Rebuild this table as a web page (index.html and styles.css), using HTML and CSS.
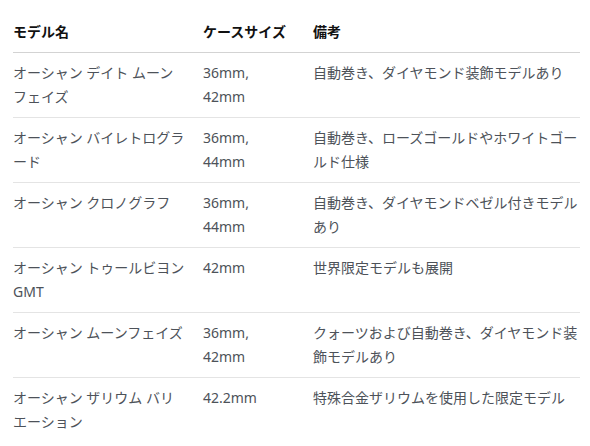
FILE: index.html
```html
<!DOCTYPE html>
<html lang="ja">
<head>
<meta charset="utf-8">
<title>オーシャン モデル一覧</title>
<link rel="stylesheet" href="styles.css">
</head>
<body>
<div class="page">
  <table class="models">
    <colgroup>
      <col class="col-name">
      <col class="col-size">
      <col class="col-note">
    </colgroup>
    <thead>
      <tr>
        <th class="c-name">モデル名</th>
        <th class="c-size">ケースサイズ</th>
        <th class="c-note">備考</th>
      </tr>
    </thead>
    <tbody>
      <tr>
        <td class="c-name">オーシャン デイト ムーン フェイズ</td>
        <td class="c-size">36mm, 42mm</td>
        <td class="c-note">自動巻き、ダイヤモンド装飾モデルあり</td>
      </tr>
      <tr>
        <td class="c-name">オーシャン バイレトログラード</td>
        <td class="c-size">36mm, 44mm</td>
        <td class="c-note">自動巻き、ローズゴールドやホワイトゴールド仕様</td>
      </tr>
      <tr>
        <td class="c-name">オーシャン クロノグラフ</td>
        <td class="c-size">36mm, 44mm</td>
        <td class="c-note">自動巻き、ダイヤモンドベゼル付きモデルあり</td>
      </tr>
      <tr>
        <td class="c-name">オーシャン トゥールビヨン GMT</td>
        <td class="c-size">42mm</td>
        <td class="c-note">世界限定モデルも展開</td>
      </tr>
      <tr>
        <td class="c-name">オーシャン ムーンフェイズ</td>
        <td class="c-size">36mm, 42mm</td>
        <td class="c-note">クォーツおよび自動巻き、ダイヤモンド装飾モデルあり</td>
      </tr>
      <tr>
        <td class="c-name">オーシャン ザリウム バリエーション</td>
        <td class="c-size">42.2mm</td>
        <td class="c-note">特殊合金ザリウムを使用した限定モデル</td>
      </tr>
    </tbody>
  </table>
</div>
</body>
</html>
```
FILE: styles.css
```css
html, body {
  margin: 0;
  padding: 0;
  background: #ffffff;
}

.page {
  padding: 12px 10px 0 13px;
  font-family: "Noto Sans", "Noto Sans CJK JP", sans-serif;
  font-size: 14px;
  line-height: 24px;
}

.models {
  width: 567px;
  table-layout: fixed;
  border-collapse: collapse;
}

.col-name { width: 190px; }
.col-size { width: 110px; }
.col-note { width: 267px; }

.models th,
.models td {
  text-align: left;
  vertical-align: top;
  padding: 8px 0;
}

.models th {
  font-weight: 700;
  color: #111111;
  white-space: nowrap;
  border-bottom: 1px solid #d3d3d3;
}

.models td {
  color: #4d5259;
}

.models tbody tr + tr td {
  border-top: 1px solid #e4e4e4;
}

.c-name { padding-right: 17px !important; }
.c-size { padding-right: 40px !important; }
.c-note { padding-right: 0 !important; }
```
